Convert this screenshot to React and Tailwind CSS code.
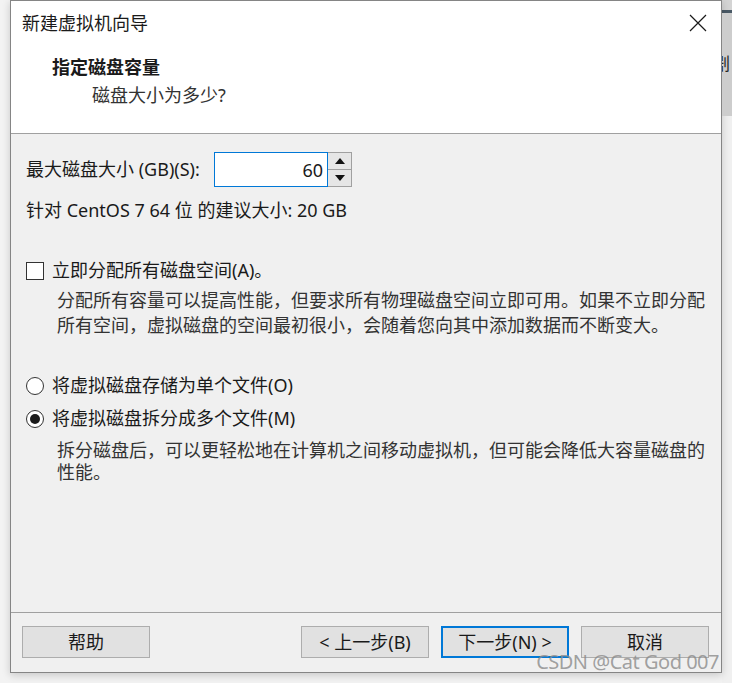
import React, { useState } from 'react';

const cjk = { fontFamily: '"Noto Sans", "Noto Sans CJK SC", sans-serif' };

const WizardButton = ({ children, primary, className = '' }) => (
  <button
    className={`w-[128px] h-[32px] text-[18px] leading-none text-[#1a1a1a] bg-[#e1e1e1] whitespace-nowrap ${
      primary ? 'border-2 border-[#0078d7]' : 'border border-[#adadad]'
    } ${className}`}
  >
    {children}
  </button>
);

const Radio = ({ checked }) => (
  <span className="w-[18px] h-[18px] rounded-full border border-[#333] bg-white flex items-center justify-center shrink-0">
    {checked && <span className="w-[10px] h-[10px] rounded-full bg-[#1a1a1a]" />}
  </span>
);

const App = () => {
  const [size, setSize] = useState(60);
  const [allocate, setAllocate] = useState(false);
  const [mode, setMode] = useState('split');

  return (
    <div className="w-[732px] h-[683px] flex bg-[#f2f2f2] overflow-hidden text-[#1a1a1a]" style={cjk}>
      <div className="w-[10px] shrink-0 bg-[#f3f3f3]" />

      <div className="w-[712px] shrink-0 h-[673px] flex flex-col border border-[#858585] bg-[#f0f0f0] relative shadow-[0_2px_8px_rgba(0,0,0,0.18)]">
        {/* header */}
        <div className="h-[133px] shrink-0 bg-white border-b border-[#a0a0a0] flex flex-col">
          <div className="h-[44px] flex items-center justify-between pl-[11px] pr-[14px]">
            <span className="text-[18px]">新建虚拟机向导</span>
            <svg width="18" height="18" viewBox="0 0 18 18" className="text-[#1a1a1a]">
              <path d="M1 1 L17 17 M17 1 L1 17" stroke="currentColor" strokeWidth="1.2" />
            </svg>
          </div>
          <div className="pl-[41px] mt-[10px] text-[18px] font-bold leading-[25px]">指定磁盘容量</div>
          <div className="pl-[81px] mt-[3px] text-[18px] text-[#333] leading-[25px]">磁盘大小为多少?</div>
        </div>

        {/* body */}
        <div className="flex-1 flex flex-col pl-[15px] pr-[6px] text-[18px] whitespace-nowrap">
          <div className="mt-[18px] h-[35px] flex items-center">
            <span className="w-[188px] shrink-0">最大磁盘大小 (GB)(S):</span>
            <div className="flex h-[35px]">
              <input
                value={size}
                onChange={(e) => setSize(e.target.value)}
                className="w-[114px] h-[35px] border border-[#0078d7] bg-white text-right pr-[4px] text-[18px] outline-none"
                style={cjk}
              />
              <div className="w-[24px] h-[35px] flex flex-col border border-[#a0a0a0] border-l-0">
                <button
                  onClick={() => setSize(Number(size) + 1)}
                  className="flex-1 flex items-center justify-center bg-[#e6e6e6] border-b border-[#a0a0a0]"
                >
                  <svg width="10" height="6" viewBox="0 0 10 6">
                    <path d="M0 6 L5 0 L10 6 Z" fill="#111" />
                  </svg>
                </button>
                <button
                  onClick={() => setSize(Number(size) - 1)}
                  className="flex-1 flex items-center justify-center bg-[#e6e6e6]"
                >
                  <svg width="10" height="6" viewBox="0 0 10 6">
                    <path d="M0 0 L5 6 L10 0 Z" fill="#111" />
                  </svg>
                </button>
              </div>
            </div>
          </div>

          <div className="mt-[11px] leading-[25px]">针对 CentOS 7 64 位 的建议大小: 20 GB</div>

          <label className="mt-[35px] h-[25px] flex items-center cursor-pointer" onClick={() => setAllocate(!allocate)}>
            <span className="w-[18px] h-[18px] border border-[#333] bg-white shrink-0 flex items-center justify-center text-[13px]">
              {allocate ? '✓' : ''}
            </span>
            <span className="ml-[8px]">立即分配所有磁盘空间(A)。</span>
          </label>

          <div className="mt-[5px] pl-[31px] leading-[25px] text-[#333]">
            <div>分配所有容量可以提高性能，但要求所有物理磁盘空间立即可用。如果不立即分配</div>
            <div>所有空间，虚拟磁盘的空间最初很小，会随着您向其中添加数据而不断变大。</div>
          </div>

          <label className="mt-[35px] h-[25px] flex items-center cursor-pointer" onClick={() => setMode('single')}>
            <Radio checked={mode === 'single'} />
            <span className="ml-[8px]">将虚拟磁盘存储为单个文件(O)</span>
          </label>
          <label className="mt-[8px] h-[25px] flex items-center cursor-pointer" onClick={() => setMode('split')}>
            <Radio checked={mode === 'split'} />
            <span className="ml-[8px]">将虚拟磁盘拆分成多个文件(M)</span>
          </label>

          <div className="mt-[8px] pl-[31px] leading-[22px] text-[#333]">
            <div>拆分磁盘后，可以更轻松地在计算机之间移动虚拟机，但可能会降低大容量磁盘的</div>
            <div>性能。</div>
          </div>
        </div>

        {/* footer */}
        <div className="h-[60px] shrink-0 border-t border-[#a0a0a0] flex items-start pt-[13px] pl-[11px] pr-[12px]">
          <WizardButton>帮助</WizardButton>
          <div className="flex-1" />
          <WizardButton>&lt; 上一步(B)</WizardButton>
          <WizardButton primary className="ml-[12px]">下一步(N) &gt;</WizardButton>
          <WizardButton className="ml-[12px]">取消</WizardButton>
        </div>

        <div className="absolute right-[2px] bottom-[-5px] text-[20px] text-[#8a8a8a]/80 tracking-tight pointer-events-none">
          CSDN @Cat God 007
        </div>
      </div>

      <div className="w-[10px] shrink-0 flex flex-col">
        <div className="h-[10px] bg-[#d4d4d4]" />
        <div className="h-[3px] bg-[#4a5a66]" />
        <div className="h-[103px] bg-[#cdcdcd] relative overflow-hidden">
          <span className="absolute left-[-9px] top-[38px] text-[17px] text-[#222]">剧</span>
        </div>
        <div className="flex-1 bg-[#f0f0f0]" />
      </div>
    </div>
  );
};

export default App;
